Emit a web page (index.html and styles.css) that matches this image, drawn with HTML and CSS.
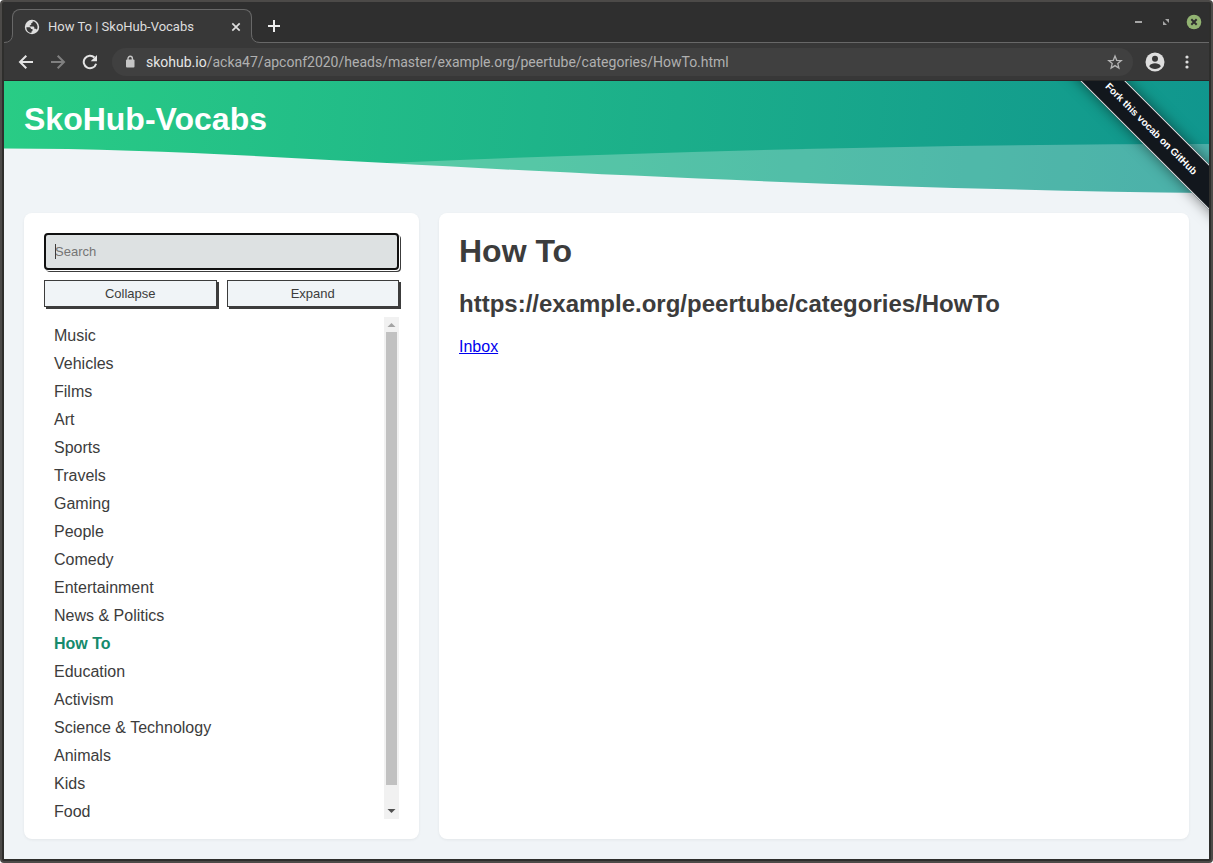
FILE: index.html
```html
<!DOCTYPE html>
<html lang="en">
<head>
<meta charset="utf-8">
<title>How To | SkoHub-Vocabs</title>
<link rel="stylesheet" href="styles.css">
</head>
<body>
<div class="window">
  <div class="tabstrip">
    <div class="tab">
      <svg class="icon" width="16" height="16" viewBox="0 0 16 16"><circle cx="8" cy="8" r="7.200" fill="#dedede"/><path d="M2.400 8.200h3.200c1 0 1.300.8 1.300 1.700h1.600v1.500c0 .6-.5.900-1.100 1v1.600C4.600 13.700 2.300 11.400 2.400 8.200z" fill="#383838"/><path d="M8.700 2.200v.9c0 .8-.6 1.100-1.500 1.100v1.300c0 .6-.5.8-1.400.8v1.300h3.600c.6 0 .9.4.9 1v1.200h1.200c.7 0 1.100.4 1.300 1C14.800 7.500 12.600 2.600 8.700 2.200z" fill="#383838"/></svg>
      <span class="tab-title">How To | SkoHub-Vocabs</span>
      <button class="chrome-btn" aria-label="Close tab"><svg width="16" height="16" viewBox="0 0 16 16"><path d="M4.300 4.300l7.400 7.400M11.700 4.300l-7.400 7.400" stroke="#dedede" stroke-width="1.700"/></svg></button>
      <svg class="flare flare-left" width="9" height="9" viewBox="0 0 9 9"><path d="M9 0v9H0V8.500Q8.500 8.500 8.500 0z" fill="#383838"/><path d="M0 8.500Q8.500 8.500 8.500 0" fill="none" stroke="#686868"/></svg>
      <svg class="flare flare-right" width="9" height="9" viewBox="0 0 9 9"><path d="M0 0v9h9v-.5Q.5 8.500.5 0z" fill="#383838"/><path d="M9 8.500Q.5 8.500.5 0" fill="none" stroke="#686868"/></svg>
    </div>
    <button class="chrome-btn new-tab" aria-label="New tab"><svg width="16" height="16" viewBox="0 0 16 16"><path d="M8 2v12M2 8h12" stroke="#eee" stroke-width="2"/></svg></button>
    <div class="window-controls">
      <button class="chrome-btn" aria-label="Minimize"><svg width="16" height="16" viewBox="0 0 16 16"><path d="M5 8h7" stroke="#a6a6a6" stroke-width="2"/></svg></button>
      <button class="chrome-btn" aria-label="Restore"><svg width="16" height="16" viewBox="0 0 16 16"><path d="M7 5h4v4zM5 7l4 4H5z" fill="#a6a6a6"/></svg></button>
      <button class="chrome-btn" aria-label="Close window"><svg width="16" height="16" viewBox="0 0 16 16"><circle cx="8" cy="8" r="7.300" fill="#92b372"/><path d="M5.300 5.300l5.400 5.400M10.700 5.300l-5.400 5.400" stroke="#2f2f2f" stroke-width="2"/></svg></button>
    </div>
  </div>
  <div class="toolbar">
    <button class="chrome-btn" aria-label="Back"><svg width="16" height="16" viewBox="0 0 16 16"><path d="M15 8H2.500M8.300 1.700L2 8l6.300 6.300" fill="none" stroke="#e4e4e4" stroke-width="2"/></svg></button>
    <button class="chrome-btn" aria-label="Forward"><svg width="16" height="16" viewBox="0 0 16 16"><path d="M1 8h12.500M7.700 1.700L14 8l-6.300 6.300" fill="none" stroke="#808080" stroke-width="2"/></svg></button>
    <button class="chrome-btn" aria-label="Reload"><svg width="16" height="16" viewBox="0 0 16 16"><path d="M12.500 3.500A6.300 6.300 0 1 0 14.100 9.700" fill="none" stroke="#e4e4e4" stroke-width="2"/><path d="M15 1v6.300H8.700z" fill="#e4e4e4"/></svg></button>
    <div class="address">
      <svg class="icon" width="10" height="14" viewBox="0 0 10 14"><rect x="1" y="4.500" width="8.500" height="8" rx="1" fill="#c6c6c6"/><path d="M3 5V3.500a2.200 2.200 0 0 1 4.400 0V5" fill="none" stroke="#c6c6c6" stroke-width="1.400"/></svg>
      <div class="url" role="textbox" aria-label="Address"><span class="host">skohub.io</span>/acka47/apconf2020/heads/master/example.org/peertube/categories/HowTo.html</div>
      <button class="chrome-btn" aria-label="Bookmark"><svg width="16" height="16" viewBox="0 0 16 16"><path d="M8 2l1.700 4.300 4.600.3-3.500 3 1.100 4.500L8 11.600l-3.900 2.500 1.100-4.500-3.500-3 4.600-.3z" fill="none" stroke="#b5b5b5" stroke-width="1.300"/></svg></button>
    </div>
    <button class="chrome-btn" aria-label="Profile"><svg width="20" height="20" viewBox="0 0 20 20"><circle cx="10" cy="10" r="9.500" fill="#dedede"/><circle cx="10" cy="6.700" r="3" fill="#383838"/><path d="M4.200 14.300C5 12 7.800 11.300 10 11.300s5 .7 5.800 3C14.500 16 12.500 17 10 17s-4.500-1-5.800-2.700z" fill="#383838"/></svg></button>
    <button class="chrome-btn" aria-label="Menu"><svg width="16" height="16" viewBox="0 0 16 16"><g fill="#dedede"><circle cx="8" cy="3" r="1.600"/><circle cx="8" cy="8" r="1.600"/><circle cx="8" cy="13" r="1.600"/></g></svg></button>
  </div>

  <div class="page">
    <header class="header">
      <svg class="wave" viewBox="0 0 1205 112" preserveAspectRatio="none"><path d="M383 82Q820 63 1205 63V112H383z" fill="#fff" fill-opacity=".25"/><path d="M0 67.500C130 67.500 250 75 383 82C630 96 930 109 1205 112H0z" fill="#f0f4f7"/></svg>
      <div class="site-title">SkoHub-Vocabs</div>
    </header>
    <a class="ribbon" href="#fork">Fork this vocab on GitHub</a>
    <div class="content">
      <nav class="card sidebar">
        <div class="search-field">
          <input class="search" type="text" placeholder="Search" aria-label="Search">
          <span class="caret"></span>
        </div>
        <div class="buttons">
          <button class="btn">Collapse</button>
          <button class="btn">Expand</button>
        </div>
        <div class="concepts">
          <ul class="list">
            <li><a href="#music">Music</a></li>
            <li><a href="#vehicles">Vehicles</a></li>
            <li><a href="#films">Films</a></li>
            <li><a href="#art">Art</a></li>
            <li><a href="#sports">Sports</a></li>
            <li><a href="#travels">Travels</a></li>
            <li><a href="#gaming">Gaming</a></li>
            <li><a href="#people">People</a></li>
            <li><a href="#comedy">Comedy</a></li>
            <li><a href="#entertainment">Entertainment</a></li>
            <li><a href="#news">News &amp; Politics</a></li>
            <li><a class="current" href="#howto">How To</a></li>
            <li><a href="#education">Education</a></li>
            <li><a href="#activism">Activism</a></li>
            <li><a href="#science">Science &amp; Technology</a></li>
            <li><a href="#animals">Animals</a></li>
            <li><a href="#kids">Kids</a></li>
            <li><a href="#food">Food</a></li>
          </ul>
          <div class="scrollbar" aria-hidden="true">
            <svg width="15" height="15" viewBox="0 0 15 15"><path d="M3.500 10h8l-4-4z" fill="#a3a3a3"/></svg>
            <div class="track"><div class="thumb"></div></div>
            <svg width="15" height="15" viewBox="0 0 15 15"><path d="M3.500 5h8l-4 4z" fill="#505050"/></svg>
          </div>
        </div>
      </nav>
      <main class="card">
        <h1>How To</h1>
        <h2>https://example.org/peertube/categories/HowTo</h2>
        <p><a class="inbox" href="#inbox">Inbox</a></p>
      </main>
    </div>
  </div>
</div>
</body>
</html>
```
FILE: styles.css
```css
* { box-sizing: border-box; }

body {
  margin: 0;
  background: #fff;
  color: #3c3c3c;
  font: 16px/18px "Liberation Sans", Arial, sans-serif;
}

.window {
  display: flex;
  flex-direction: column;
  height: 100vh;
  overflow: hidden;
  padding: 0 2px 2px;
  border: 2px solid #4c4a48;
  border-radius: 4px;
  background: #2e2e2c;
}

.icon { flex: none; }

.chrome-btn {
  display: flex;
  flex: none;
  padding: 0;
  border: 0;
  background: none;
}

/* Browser tabs */
.tabstrip {
  display: flex;
  align-items: flex-end;
  height: 41px;
  padding-left: 8px;
  border-bottom: 1px solid #686868;
  background: #2f2f2f;
}

.tab {
  position: relative;
  display: flex;
  align-items: center;
  gap: 8px;
  width: 240px;
  height: 34px;
  margin-bottom: -1px;
  padding: 0 7px 0 11px;
  border: 1px solid #686868;
  border-bottom: 0;
  border-radius: 8px 8px 0 0;
  background: #383838;
}

.flare {
  position: absolute;
  bottom: 0;
}

.flare-left { right: 100%; }

.flare-right { left: 100%; }

.tab-title {
  flex: 1;
  color: #dedede;
  font: 13px/18px Roboto, "Noto Sans", sans-serif;
  white-space: nowrap;
}

.new-tab { margin: 0 0 8px 14px; }

.window-controls {
  display: flex;
  gap: 12px;
  margin: 0 7px 12px auto;
}

/* Browser toolbar */
.toolbar {
  display: flex;
  align-items: center;
  gap: 16px;
  height: 38px;
  padding: 0 14px;
  border-bottom: 1px solid #282828;
  background: #383838;
}

.toolbar > :last-child { margin-left: -2px; }

.address {
  display: flex;
  flex: 1;
  align-items: center;
  gap: 11px;
  height: 28px;
  margin: 0 -4px 0 -2px;
  padding: 0 10px 0 13px;
  border-radius: 14px;
  background: #404040;
}

.url {
  flex: 1;
  min-width: 0;
  overflow: hidden;
  color: #b0b0b0;
  font: 14px/20px Roboto, "Noto Sans", sans-serif;
  white-space: nowrap;
}

.host { color: #e6e6e6; }

/* Page */
.page {
  position: relative;
  display: flex;
  flex: 1;
  flex-direction: column;
  min-height: 0;
  overflow: hidden;
  background: #f0f4f7;
}

.header {
  position: relative;
  flex: none;
  height: 112px;
  padding: 20px;
  background: linear-gradient(95deg, #29cc85, #10968e);
}

.wave {
  position: absolute;
  inset: 0;
  width: 100%;
  height: 100%;
}

.site-title {
  position: relative;
  color: #fff;
  font-size: 32px;
  font-weight: bold;
  line-height: 36px;
}

.ribbon {
  position: absolute;
  top: 32px;
  right: -72px;
  width: 260px;
  border: 1px solid #dde2e4;
  background: #12171d;
  box-shadow: 0 0 14px rgba(0, 0, 0, .5);
  color: #fff;
  font-size: 10px;
  font-weight: bold;
  line-height: 30px;
  text-align: center;
  text-decoration: none;
  transform: rotate(45deg);
}

.content {
  display: grid;
  flex: 1;
  grid-template-columns: 395fr 750fr;
  gap: 20px;
  min-height: 0;
  padding: 20px;
}

.card {
  min-width: 0;
  min-height: 0;
  padding: 20px;
  border-radius: 8px;
  background: #fff;
  box-shadow: 0 1px 3px rgba(0, 0, 0, .06);
}

.sidebar {
  display: flex;
  flex-direction: column;
}

.search-field {
  position: relative;
  display: flex;
  flex: none;
}

.search {
  width: 100%;
  height: 37px;
  padding: 0 9px;
  border: 2px solid #101010;
  border-radius: 4px;
  background: #dde1e2;
  box-shadow: 1px 1px 0 #fff, 2px 2px 0 #3c3c3c;
  color: #3c3c3c;
  font: 13px "Liberation Sans", Arial, sans-serif;
}

.search::placeholder { color: #757575; }

.caret {
  position: absolute;
  top: 11px;
  left: 11px;
  width: 1px;
  height: 15px;
  background: #3c3c3c;
}

.buttons {
  display: grid;
  grid-template-columns: 1fr 1fr;
  gap: 10px;
  margin: 10px 0;
}

.btn {
  height: 27px;
  padding: 0;
  border: 1px solid #3c3c3c;
  background: #f0f4f7;
  box-shadow: 2px 2px 0 #3c3c3c;
  color: #3c3c3c;
  font: 13px "Liberation Sans", Arial, sans-serif;
}

.concepts {
  display: flex;
  flex: 1;
  min-height: 0;
}

.list {
  flex: 1;
  margin: 0;
  padding: 5px 10px 0;
  overflow: hidden;
  list-style: none;
}

.list li { line-height: 28px; }

.list a {
  color: #3c3c3c;
  text-decoration: none;
}

.list .current {
  color: #168a6c;
  font-weight: bold;
}

.scrollbar {
  display: flex;
  flex-direction: column;
  width: 15px;
  background: #f1f1f1;
}

.track {
  flex: 1;
  padding: 0 2px;
}

.thumb {
  height: 96%;
  background: #c1c1c1;
}

h1 {
  margin: 0 0 20px;
  font-size: 32px;
  line-height: 37px;
}

h2 {
  margin: 0 0 20px;
  font-size: 24px;
  line-height: 28px;
}

p { margin: 0; }

.inbox { color: #00e; }
```
